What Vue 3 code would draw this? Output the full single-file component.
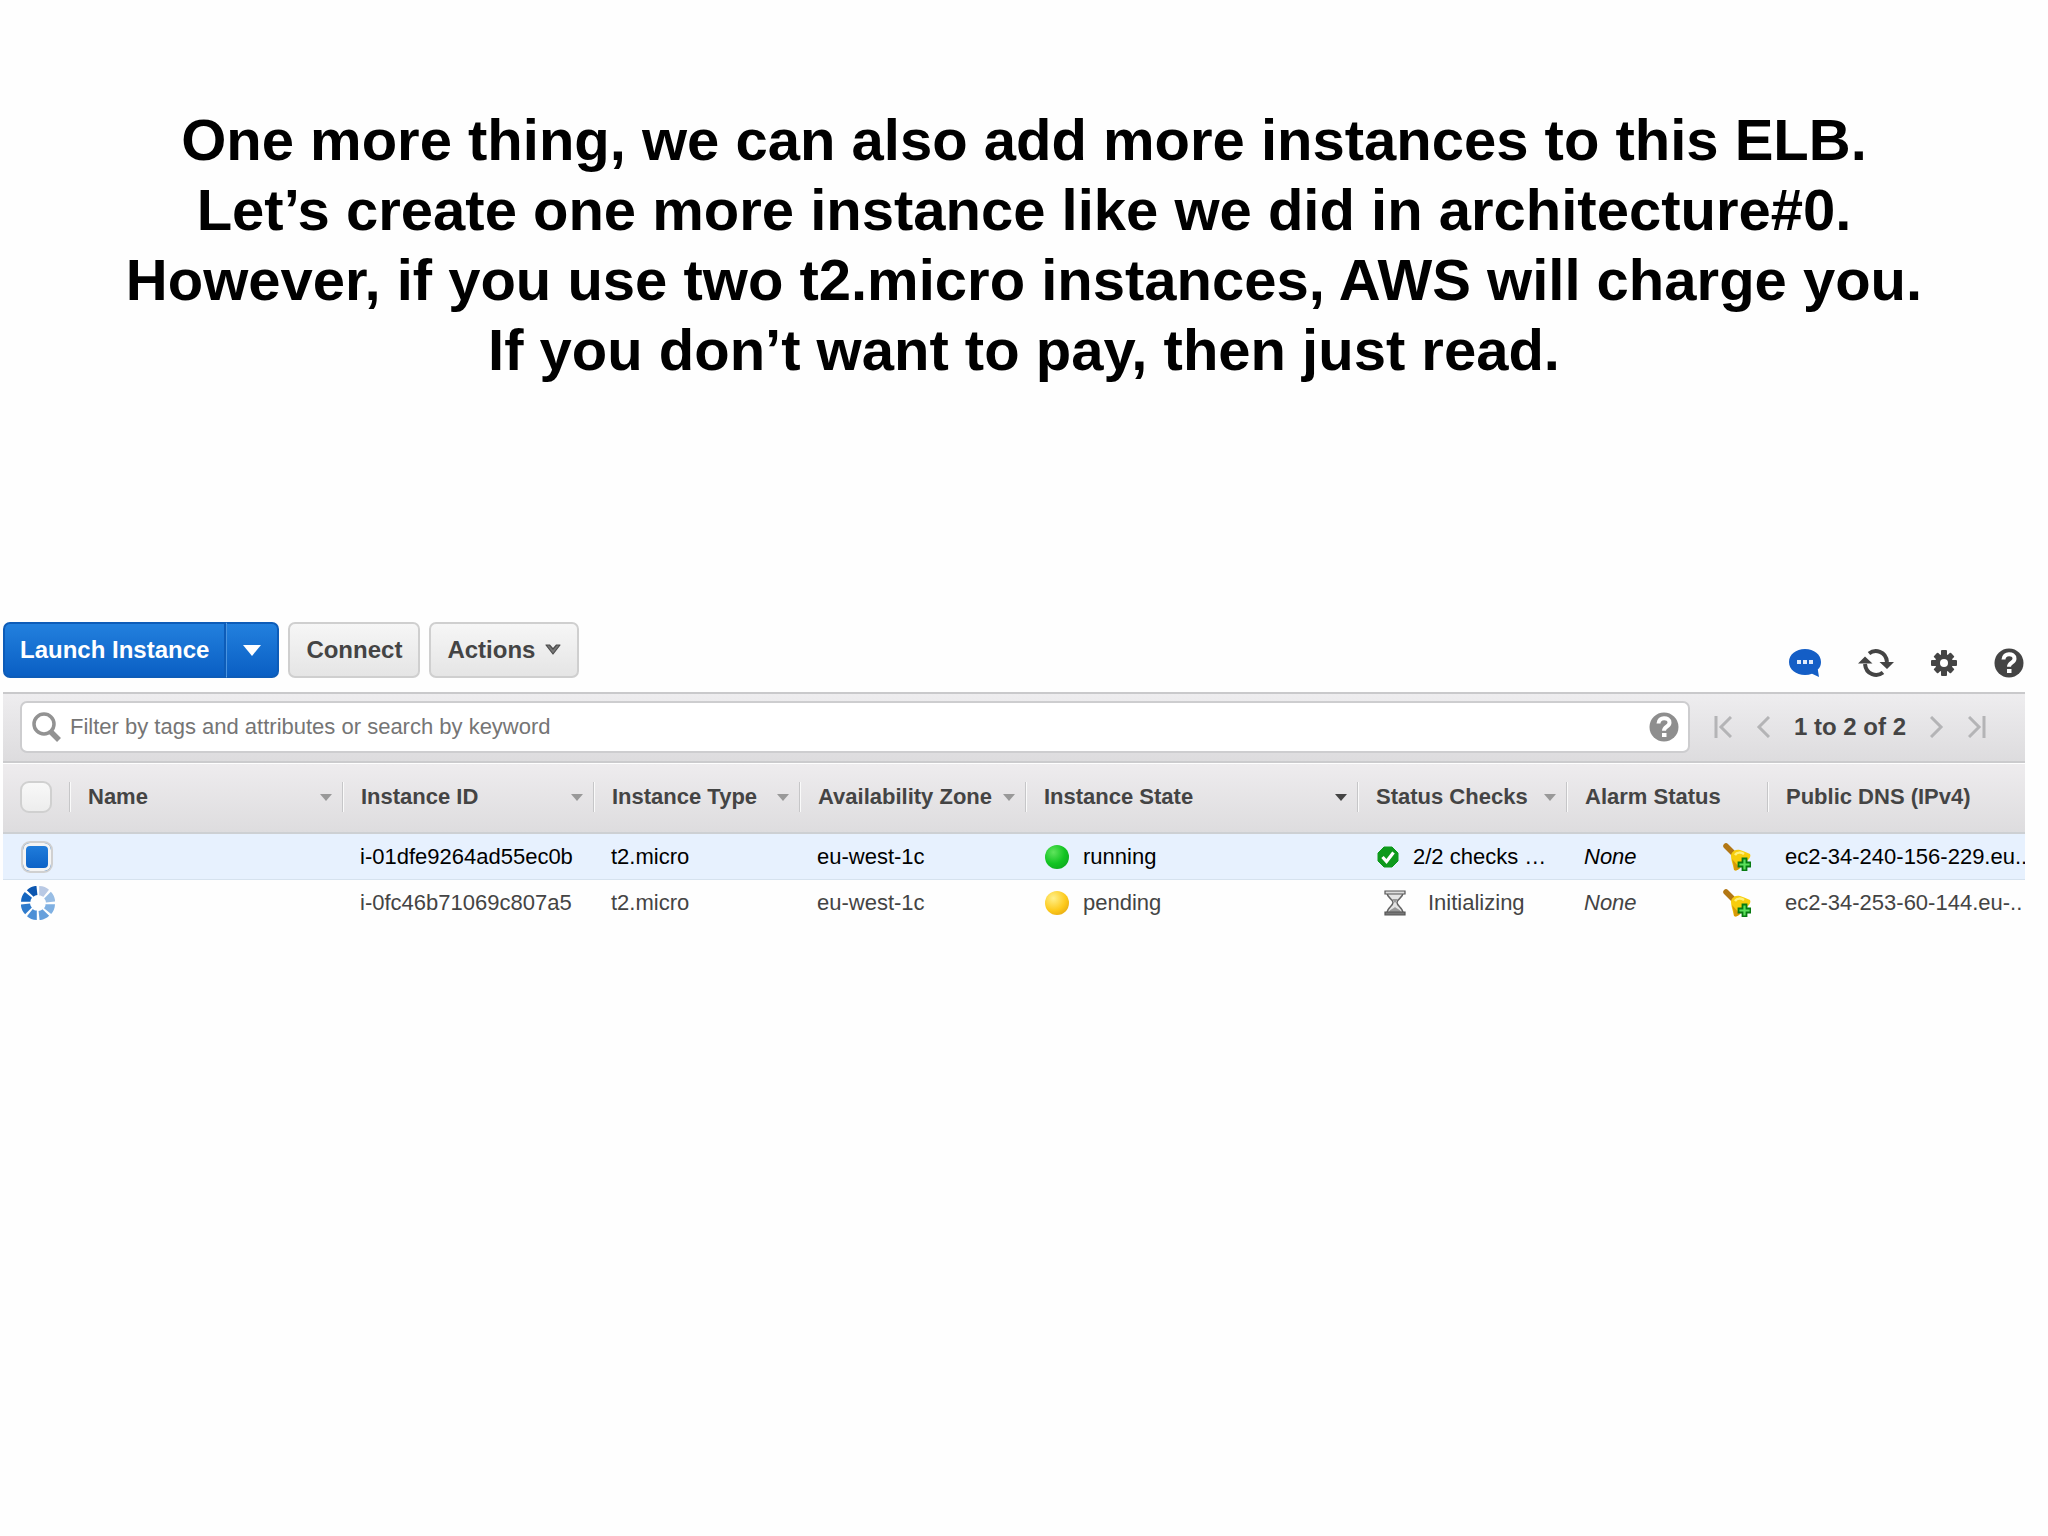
<script setup>
import { ref } from 'vue'

const heading = [
  'One more thing, we can also add more instances to this ELB.',
  'Let’s create one more instance like we did in architecture#0.',
  'However, if you use two t2.micro instances, AWS will charge you.',
  'If you don’t want to pay, then just read.'
]

const columns = [
  { key: 'name', label: 'Name', sort: true },
  { key: 'id', label: 'Instance ID', sort: true },
  { key: 'type', label: 'Instance Type', sort: true },
  { key: 'zone', label: 'Availability Zone', sort: true },
  { key: 'state', label: 'Instance State', sort: true, active: true },
  { key: 'checks', label: 'Status Checks', sort: true },
  { key: 'alarm', label: 'Alarm Status' },
  { key: 'dns', label: 'Public DNS (IPv4)' }
]

const instances = ref([
  { id: 'i-01dfe9264ad55ec0b', type: 't2.micro', zone: 'eu-west-1c', state: 'running', ready: true, checks: '2/2 checks …', alarm: 'None', dns: 'ec2-34-240-156-229.eu..', selected: true },
  { id: 'i-0fc46b71069c807a5', type: 't2.micro', zone: 'eu-west-1c', state: 'pending', ready: false, checks: 'Initializing', alarm: 'None', dns: 'ec2-34-253-60-144.eu-..', selected: false }
])

const filter = ref('')
const spinner = ['#b9c9e4', '#98bde4', '#7fb0e2', '#67a0dc', '#4c8fd6', '#2f7bcc', '#1566c0', '#0b56b0']
</script>

<template>
  <main class="page">
    <h1 class="heading">
      <span v-for="line in heading" :key="line">{{ line }}</span>
    </h1>

    <section class="console">
      <div class="toolbar">
        <div class="split">
          <button type="button" class="primary">Launch Instance</button>
          <button type="button" class="primary caret" aria-label="More launch options">
            <svg width="18" height="11" viewBox="0 0 18 11"><path d="M0 0h18L9 11z" fill="#fff" /></svg>
          </button>
        </div>
        <button type="button" class="plain">Connect</button>
        <button type="button" class="plain actions">
          Actions
          <svg width="16" height="12" viewBox="0 0 16 12"><path d="M1 1h3.500L8 5l3.500-4H15L8 10z" fill="#777" stroke="#4c4c4c" stroke-width="1.200" stroke-linejoin="round" /></svg>
        </button>

        <div class="tools">
          <button type="button" class="icon" aria-label="Feedback">
            <svg width="32" height="30" viewBox="0 0 32 30">
              <path d="M16 1C7 1 0 6.500 0 14s7 13 16 13c2.500 0 4.800-.4 7-1.200L30 29l-1.200-7.500C31 19.500 32 17 32 14 32 6.500 25 1 16 1z" fill="#145ec6" />
              <path d="M8 12h4v4H8zM14 12h4v4h-4zM20 12h4v4h-4z" fill="#dfeafa" />
            </svg>
          </button>
          <button type="button" class="icon" aria-label="Refresh">
            <svg width="36" height="28" viewBox="0 0 36 28">
              <g fill="none" stroke="#444" stroke-width="4">
                <path d="M11 4.500C17-.2 28 2 29 13" />
                <path d="M25 23.500C19 28.200 8 26 7 15" />
              </g>
              <path d="M21.500 13H36l-7 7zM0 14.500h14.500L7 7.500z" fill="#444" />
            </svg>
          </button>
          <button type="button" class="icon" aria-label="Settings">
            <svg width="26" height="28" viewBox="0 0 26 28">
              <g fill="#444">
                <rect x="10" y="1" width="6" height="26" rx="1" />
                <rect x="0" y="11" width="26" height="6" rx="1" />
                <rect x="10" y="2" width="6" height="24" rx="1" transform="rotate(45 13 14)" />
                <rect x="10" y="2" width="6" height="24" rx="1" transform="rotate(-45 13 14)" />
                <circle cx="13" cy="14" r="9" />
              </g>
              <circle cx="13" cy="14" r="4" fill="#fefefe" />
            </svg>
          </button>
          <button type="button" class="icon" aria-label="Help">
            <svg width="30" height="30" viewBox="0 0 30 30">
              <circle cx="15" cy="15" r="14.500" fill="#444" />
              <path d="M9.500 11.500c0-7 11-7 11-.8 0 4-5.500 4-5.500 8" fill="none" stroke="#fff" stroke-width="4" />
              <path d="M13 21h4.500v4H13z" fill="#fff" />
            </svg>
          </button>
        </div>
      </div>

      <div class="filterbar">
        <label class="search">
          <svg width="30" height="30" viewBox="0 0 30 30" fill="none" stroke="#929292">
            <circle cx="12" cy="12" r="10" stroke-width="3.500" />
            <path d="M19 20l8 8" stroke-width="5.500" />
          </svg>
          <input v-model="filter" type="text" aria-label="Filter instances" placeholder="Filter by tags and attributes or search by keyword" />
          <svg width="30" height="30" viewBox="0 0 30 30">
            <circle cx="15" cy="15" r="14.500" fill="#8e8e8e" />
            <path d="M9.500 11.500c0-7 11-7 11-.8 0 4-5.500 4-5.500 8" fill="none" stroke="#fff" stroke-width="4" />
            <path d="M13 21h4.500v4H13z" fill="#fff" />
          </svg>
        </label>
        <nav class="pager" aria-label="Pages">
          <button type="button" class="icon" aria-label="First page">
            <svg width="18" height="22" viewBox="0 0 18 22"><path d="M2 0v22M17 1L7 11l10 10" /></svg>
          </button>
          <button type="button" class="icon" aria-label="Previous page">
            <svg width="14" height="22" viewBox="0 0 14 22"><path d="M13 1L3 11l10 10" /></svg>
          </button>
          <span class="range">1 to 2 of 2</span>
          <button type="button" class="icon" aria-label="Next page">
            <svg width="14" height="22" viewBox="0 0 14 22"><path d="M1 1l10 10L1 21" /></svg>
          </button>
          <button type="button" class="icon" aria-label="Last page">
            <svg width="18" height="22" viewBox="0 0 18 22"><path d="M1 1l10 10L1 21M16 0v22" /></svg>
          </button>
        </nav>
      </div>

      <table class="grid">
        <colgroup>
          <col class="c-select" />
          <col v-for="c in columns" :key="c.key" :class="'c-' + c.key" />
        </colgroup>
        <thead>
          <tr>
            <th class="select"><input type="checkbox" aria-label="Select all instances" /></th>
            <th v-for="c in columns" :key="c.key" scope="col">
              <div class="head" :class="{ active: c.active }">
                <span>{{ c.label }}</span>
                <svg v-if="c.sort" width="12" height="7" viewBox="0 0 12 7"><path d="M0 0h12L6 7z" /></svg>
              </div>
            </th>
          </tr>
        </thead>
        <tbody>
          <tr v-for="row in instances" :key="row.id" :class="{ selected: row.selected }">
            <td class="select">
              <input v-if="row.ready" v-model="row.selected" type="checkbox" :aria-label="'Select ' + row.id" />
              <svg v-else width="34" height="34" viewBox="-17 -17 34 34" role="img" aria-label="Loading">
                <path
                  v-for="(color, i) in spinner"
                  :key="i"
                  d="M1.200-7.500V-17C5.500-16.800 8.500-15.500 11-13.200L5.200-6C4-7 3-7.500 1.200-7.500z"
                  :fill="color"
                  :transform="`rotate(${i * 45})`"
                />
              </svg>
            </td>
            <td></td>
            <td>{{ row.id }}</td>
            <td>{{ row.type }}</td>
            <td>{{ row.zone }}</td>
            <td>
              <div class="state"><i class="dot" :class="row.state"></i>{{ row.state }}</div>
            </td>
            <td>
              <div class="check" :class="{ waiting: !row.ready }">
                <svg v-if="row.ready" width="22" height="22" viewBox="0 0 22 22">
                  <path d="M7 1h8l6 6v8l-6 6H7l-6-6V7z" fill="#0e9a1c" stroke="#0e9a1c" stroke-linejoin="round" />
                  <path d="M5.500 11l4 4.500 7-9" fill="none" stroke="#fff" stroke-width="3.200" />
                </svg>
                <svg v-else width="22" height="28" viewBox="0 0 22 28">
                  <path d="M3 4c0 5 6 6 6 9.500S3 19 3 24h16c0-5-6-7-6-10.500S19 9 19 4z" fill="#e4e4e4" stroke="#666" stroke-width="1.500" />
                  <path d="M5 23c1-3 4-3 6-5 2 2 5 2 6 5zM8 10h6l-3 4z" fill="#999" />
                  <path d="M1 2h20v3H1z" fill="#ddd" stroke="#555" stroke-width="1.200" />
                  <path d="M1 23h20v3H1z" fill="#777" stroke="#555" stroke-width="1.200" />
                </svg>
                {{ row.checks }}
              </div>
            </td>
            <td>
              <div class="alarm">
                <em>{{ row.alarm }}</em>
                <button type="button" class="icon" :aria-label="'Add alarm for ' + row.id">
                  <svg width="28" height="28" viewBox="0 0 28 28">
                    <path d="M3 3l8 8" stroke="#b27714" stroke-width="5.500" stroke-linecap="round" />
                    <path d="M8 12c1-4 5-6 9-5 4 1 7 3 10 4 1 2 0 4-2 6l-8 8c-2 2-4 3-6 2-1-6-3-9-3-15z" fill="#f7cd0c" />
                    <path d="M9 16c1 4 2 7 2 11 2 1 4 0 6-2z" fill="#d79a08" />
                    <path d="M12 12c2-3 6-3 9-1" fill="none" stroke="#fff07a" stroke-width="2.500" />
                    <path d="M19.500 15.500h4v4h4v4h-4v4h-4v-4h-4v-4h4z" fill="#5be05b" stroke="#087a12" stroke-width="1.800" />
                  </svg>
                </button>
              </div>
            </td>
            <td>{{ row.dns }}</td>
          </tr>
        </tbody>
      </table>
    </section>
  </main>
</template>

<style>
body {
  margin: 0;
  background: #fefefe;
}
</style>

<style scoped>
.page {
  padding-top: 105px;
  font-family: "Liberation Sans", Arial, Helvetica, sans-serif;
  color: #444;
}

.heading {
  display: flex;
  flex-direction: column;
  margin: 0 0 237px;
  font-size: 58px;
  line-height: 70px;
  text-align: center;
  color: #000;
}

.console {
  margin: 0 23px 0 3px;
  font-size: 22px;
}

svg {
  display: block;
  flex: none;
}

button {
  box-sizing: border-box;
  font-family: inherit;
  cursor: pointer;
}

.toolbar {
  display: flex;
  gap: 9px;
  height: 70px;
}

.primary,
.plain {
  height: 56px;
  padding: 0 15px;
  border-radius: 7px;
  font-size: 24px;
  font-weight: bold;
}

.split {
  display: flex;
}

.primary {
  border: 2px solid #0d5cb8;
  background: linear-gradient(#2280de, #0a5fc4);
  color: #fff;
  border-radius: 7px 0 0 7px;
}

.caret {
  padding: 0 16px;
  border-left: 1px solid #4a94e0;
  border-radius: 0 7px 7px 0;
}

.plain {
  border: 2px solid #cfcfcf;
  background: linear-gradient(#f6f6f6, #e5e5e5);
  color: #444;
  padding: 0 16px;
}

.actions {
  display: flex;
  align-items: center;
  gap: 10px;
}

.tools {
  display: flex;
  align-items: center;
  gap: 37px;
  margin-left: auto;
  margin-right: 1px;
  padding-top: 12px;
}

.icon {
  padding: 0;
  border: 0;
  background: none;
}

.filterbar {
  display: flex;
  align-items: center;
  height: 71px;
  box-sizing: border-box;
  padding: 0 39px 2px 17px;
  border-top: 2px solid #c9c9cb;
  border-bottom: 2px solid #cbcbcd;
  background: linear-gradient(#eeedef, #dddcde);
}

.search {
  display: flex;
  flex: 1;
  align-items: center;
  gap: 8px;
  height: 52px;
  box-sizing: border-box;
  padding: 0 9px 0 10px;
  border: 2px solid #cdcdcf;
  border-radius: 7px;
  background: #fff;
}

.search input {
  flex: 1;
  min-width: 0;
  padding: 0;
  border: 0;
  outline: 0;
  background: none;
  font: inherit;
  color: #444;
}

.search input::placeholder {
  color: #757575;
  opacity: 1;
}

.pager {
  display: flex;
  align-items: center;
  gap: 24px;
  margin-left: 24px;
}

.pager path {
  fill: none;
  stroke: #b4b4b6;
  stroke-width: 3;
}

.range {
  font-size: 24px;
  font-weight: bold;
}

.grid {
  width: 100%;
  table-layout: fixed;
  border-collapse: separate;
  border-spacing: 0;
  margin-top: 1px;
}

.c-select { width: 66px; }
.c-name { width: 273px; }
.c-id { width: 251px; }
.c-type { width: 206px; }
.c-zone { width: 226px; }
.c-state { width: 332px; }
.c-checks { width: 209px; }
.c-alarm { width: 201px; }

thead tr {
  background: linear-gradient(#eeecee, #dddcde);
}

th {
  height: 70px;
  box-sizing: border-box;
  padding: 0 0 2px;
  border-bottom: 2px solid #cdd0d3;
  text-align: left;
  white-space: nowrap;
}

.head {
  display: flex;
  align-items: center;
  justify-content: space-between;
  height: 30px;
  padding: 0 10px 0 18px;
  border-left: 1px solid #c6c6c8;
  box-shadow: inset 1px 0 #fafafa;
}

.head path {
  fill: #999;
}

.active path {
  fill: #444;
}

td {
  height: 46px;
  box-sizing: border-box;
  padding: 0 0 0 18px;
  overflow: hidden;
  white-space: nowrap;
}

.selected td {
  border-bottom: 1px solid #d6e2ee;
  background: #e7f1fe;
  color: #000;
}

th.select {
  padding-left: 17px;
}

.select input {
  display: block;
  appearance: none;
  width: 32px;
  height: 32px;
  box-sizing: border-box;
  margin: 0;
  border: 2px solid #d0d0d0;
  border-radius: 9px;
  background: linear-gradient(#f8f8f8, #ededed);
}

.select input:checked {
  background: linear-gradient(#2280de, #0a5fc4);
  box-shadow: inset 0 0 0 3px #f4f4f4;
}

.state {
  display: flex;
  align-items: center;
  gap: 14px;
  padding-left: 2px;
}

.dot {
  width: 24px;
  height: 24px;
  border-radius: 50%;
}

.running {
  background: radial-gradient(circle at 35% 30%, #5fe45c, #12c422 50%, #0c9c1c);
}

.pending {
  background: radial-gradient(circle at 35% 30%, #fff08a, #fdc91a 55%, #d99a10);
}

.check {
  display: flex;
  align-items: center;
  gap: 14px;
  padding-left: 2px;
}

.waiting {
  gap: 22px;
  padding-left: 9px;
}

.alarm {
  display: flex;
  align-items: center;
  justify-content: space-between;
  padding-right: 16px;
}
</style>
